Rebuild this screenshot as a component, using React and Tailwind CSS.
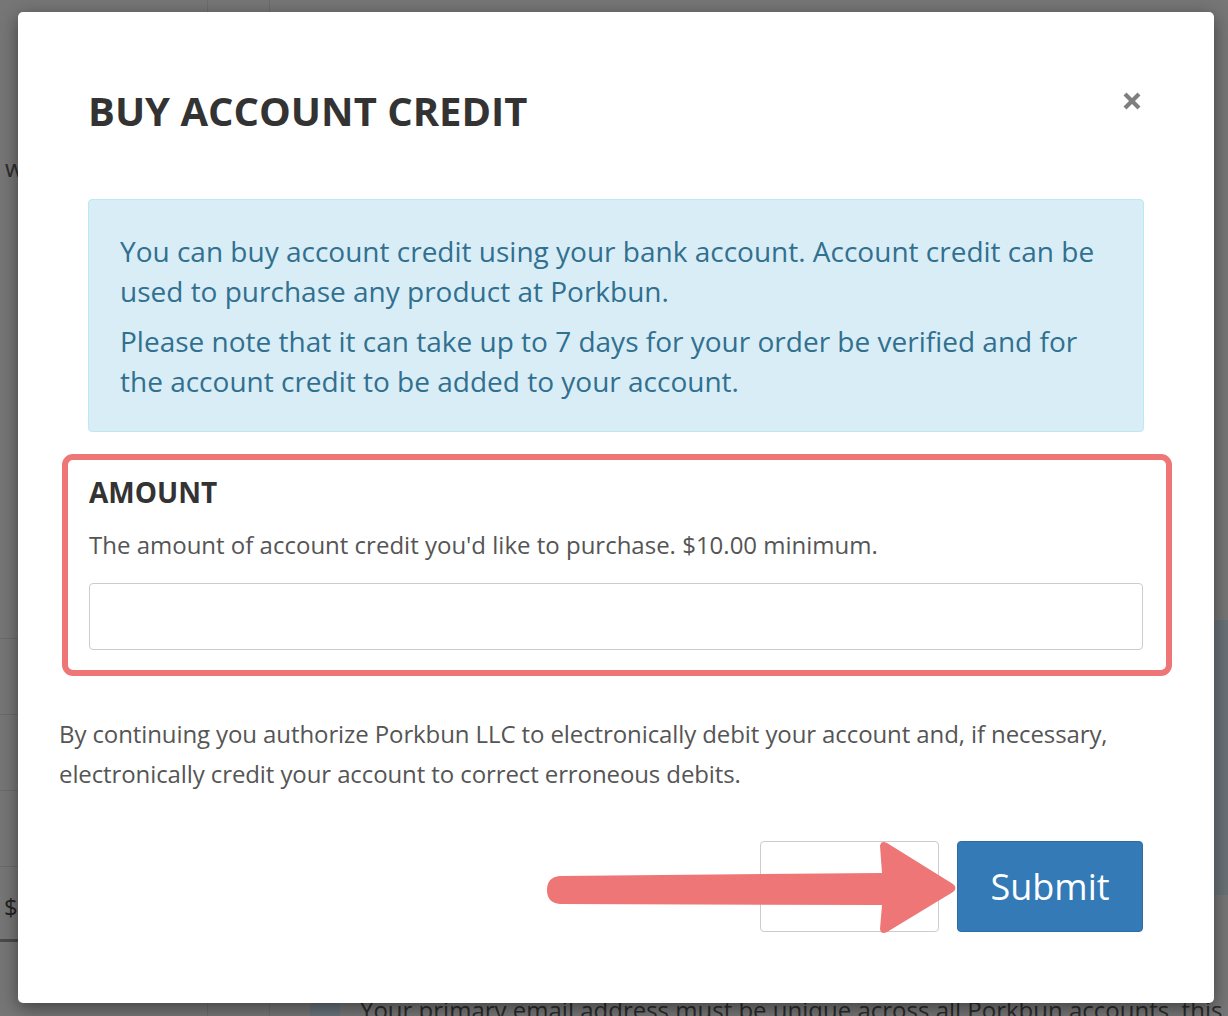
import React from 'react';

function CloseIcon() {
  return (
    <svg width="20" height="20" viewBox="0 0 20 20" className="text-[#7f7f7f]">
      <path d="M3 3 L17 17 M17 3 L3 17" stroke="currentColor" strokeWidth="4.2" strokeLinecap="butt" />
    </svg>
  );
}

function Arrow() {
  return (
    <svg width="425" height="105" viewBox="0 0 425 105" className="absolute left-[540px] top-[835px]">
      <path
        d="M20 41 L342 38 L340 11 Q341 5 347 8 L413 49 Q418 53 413 57 L347 97 Q341 100 340 94 L342 70 L20 69 Q7 68 7 55 Q7 42 20 41 Z"
        fill="#ef7676"
      />
    </svg>
  );
}

export default function App() {
  return (
    <div className="relative h-[1016px] w-[1228px] overflow-hidden bg-[#767676] font-['Open_Sans',sans-serif]">
      {/* page behind the overlay */}
      <div className="flex h-full">
        <div className="flex w-[208px] shrink-0 flex-col border-r border-[#6c6c6c]">
          <div className="h-[150px]" />
          <div className="pl-[5px] text-[24px] text-[#2b2b2b]">w</div>
          <div className="h-[452px]" />
          <div className="h-[76px] border-t border-[#6a6a6a]" />
          <div className="h-[76px] border-t border-[#6a6a6a]" />
          <div className="h-[76px] border-t border-[#6a6a6a]" />
          <div className="h-[76px] border-t border-b-[3px] border-[#6a6a6a] border-b-[#4a4a4a] pl-[4px] pt-[22px] text-[24px] text-[#222]">$</div>
        </div>
        <div className="w-[62px] shrink-0 border-r border-[#6c6c6c]" />
        <div className="flex min-w-0 flex-1 flex-col">
          <div className="flex-1" />
          <div className="flex h-[18px] items-start">
            <div className="mr-[20px] ml-[40px] h-[18px] w-[30px] shrink-0 bg-[#68737a]" />
            <div className="-mt-[6px] text-[24px] whitespace-nowrap text-[#2a2a2a]">
              Your primary email address must be unique across all Porkbun accounts, this is
            </div>
          </div>
        </div>
      </div>
      <div className="absolute top-[620px] right-0 h-[275px] w-[40px] bg-[#6a7277]" />

      {/* modal */}
      <div className="absolute top-[12px] left-[18px] flex h-[991px] w-[1196px] flex-col rounded-[5px] bg-white shadow-[0_5px_18px_rgba(0,0,0,0.45)]">
        <div className="flex items-start justify-between pt-[74px] pr-[72px] pl-[70px]">
          <h1 className="text-[40px] leading-[50px] font-bold text-[#333]">BUY ACCOUNT CREDIT</h1>
          <button className="mt-[5px]">
            <CloseIcon />
          </button>
        </div>

        <div className="mx-[70px] mt-[63px] rounded-[4px] border border-[#bce8f1] bg-[#d9edf7] px-[31px] pt-[31px] pb-[30px] text-[28px] leading-[40px] text-[#31708f]">
          <p>You can buy account credit using your bank account. Account credit can be used to purchase any product at Porkbun.</p>
          <p className="mt-[10px]">Please note that it can take up to 7 days for your order be verified and for the account credit to be added to your account.</p>
        </div>

        <div className="mr-[42px] ml-[44px] mt-[22px] rounded-[11px] border-[6px] border-[#ef7676] pr-[23px] pl-[21px] pt-[12px] pb-[20px]">
          <div className="text-[28px] leading-[40px] font-bold text-[#333]">AMOUNT</div>
          <div className="mt-[13px] text-[24px] leading-[40px] text-[#555]">
            The amount of account credit you'd like to purchase. $10.00 minimum.
          </div>
          <input className="mt-[18px] block h-[67px] w-full rounded-[4px] border border-[#ccc] bg-white" />
        </div>

        <p className="mx-[41px] mt-[38px] text-[24px] leading-[40px] tracking-[-0.1px] text-[#555]">
          By continuing you authorize Porkbun LLC to electronically debit your account and, if necessary, electronically credit your account to correct erroneous debits.
        </p>

        <div className="mt-[47px] flex justify-end gap-[18px] pr-[71px]">
          <button className="h-[91px] w-[179px] rounded-[4px] border border-[#ccc] bg-white text-[36px] text-[#333]">
            Cancel
          </button>
          <button className="h-[91px] w-[186px] rounded-[4px] border border-[#2e6da4] bg-[#337ab7] text-[36px] text-white">
            Submit
          </button>
        </div>
      </div>

      <Arrow />
    </div>
  );
}
